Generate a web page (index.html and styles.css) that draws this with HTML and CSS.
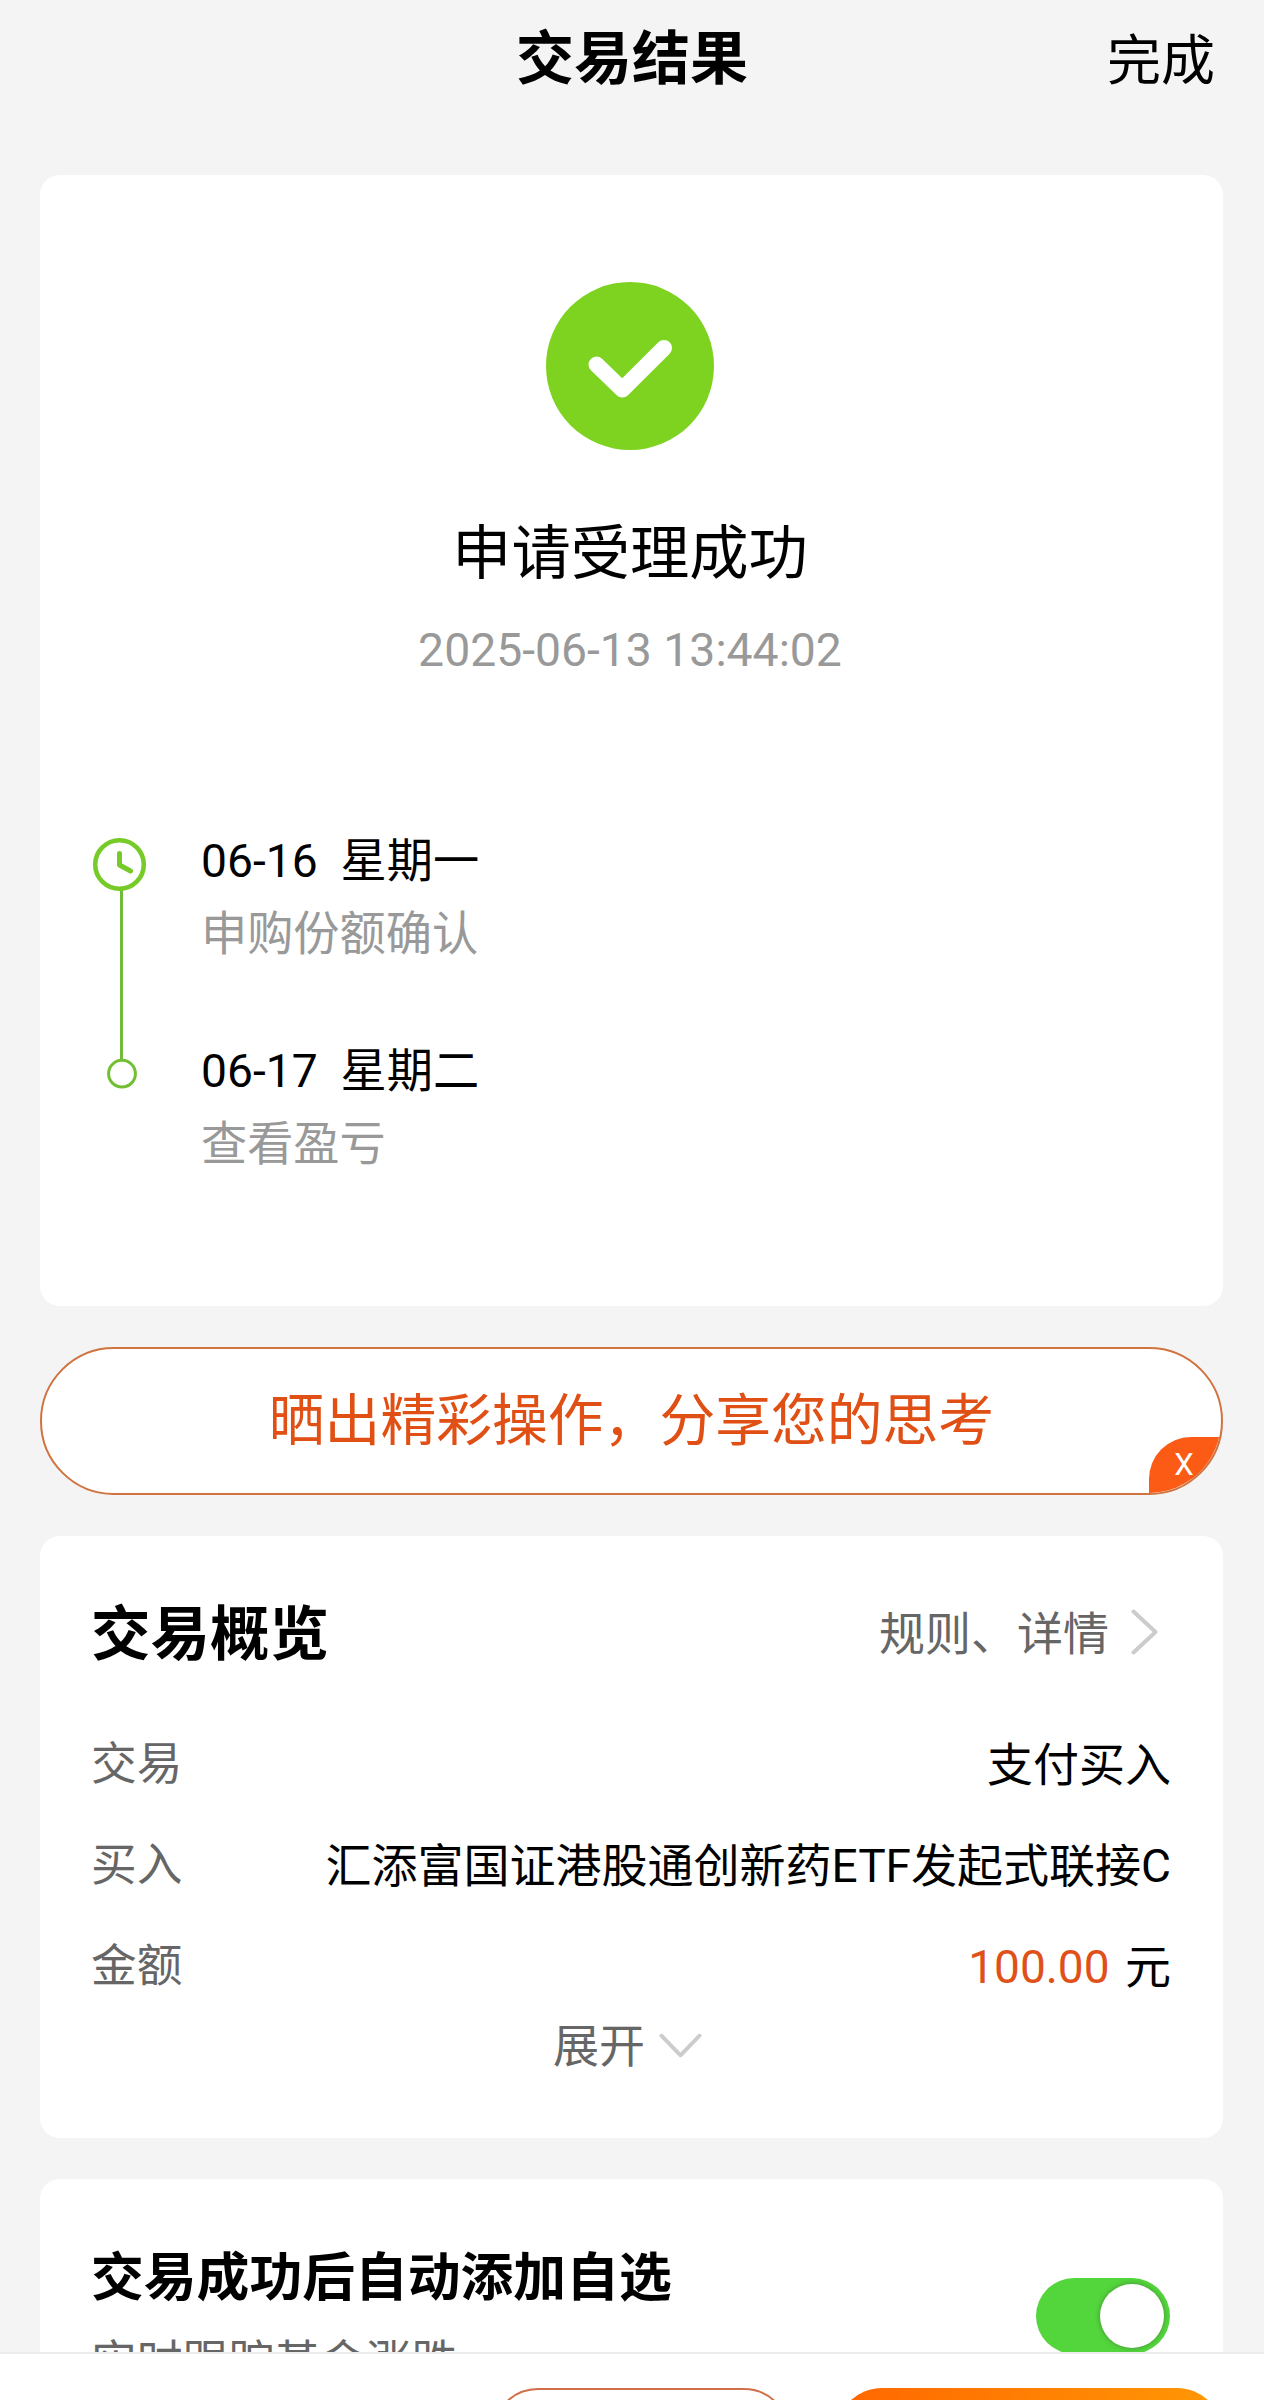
FILE: index.html
```html
<!DOCTYPE html>
<html lang="zh-CN">
<head>
<meta charset="utf-8">
<title>交易结果</title>
<link rel="stylesheet" href="styles.css">
</head>
<body>
<div class="screen">
  <header class="header">
    <h1 class="header-title">交易结果</h1>
    <a class="header-done">完成</a>
  </header>

  <main class="content">
    <section class="card result">
      <div class="status">
        <svg class="status-icon" viewBox="0 0 168 168">
          <circle cx="84" cy="84" r="84" fill="#7ed321"/>
          <path d="M50.5 82.5 L76.3 107.5 L118 66" fill="none" stroke="#fff" stroke-width="16" stroke-linecap="round" stroke-linejoin="round"/>
        </svg>
        <p class="status-text">申请受理成功</p>
        <p class="status-time">2025-06-13 13:44:02</p>
      </div>
      <div class="timeline">
        <svg class="timeline-rail" viewBox="0 0 60 260">
          <path d="M30.5 52 V222" stroke="#72bb3a" stroke-width="3"/>
          <circle cx="28.5" cy="27.5" r="24.3" fill="#fff" stroke="#76cb28" stroke-width="4.6"/>
          <path d="M28.5 16.5 V28 L39.5 34" fill="none" stroke="#76cb28" stroke-width="5" stroke-linecap="round" stroke-linejoin="round"/>
          <circle cx="31" cy="236.7" r="13.4" fill="#fff" stroke="#72bf33" stroke-width="3"/>
        </svg>
        <ol class="steps">
          <li class="step">
            <p class="step-date">06-16&nbsp; 星期一</p>
            <p class="step-note">申购份额确认</p>
          </li>
          <li class="step">
            <p class="step-date">06-17&nbsp; 星期二</p>
            <p class="step-note">查看盈亏</p>
          </li>
        </ol>
      </div>
    </section>

    <div class="share">
      <span class="share-text">晒出精彩操作，分享您的思考</span>
      <span class="share-close">X</span>
    </div>

    <section class="card overview">
      <div class="overview-head">
        <h2 class="overview-title">交易概览</h2>
        <a class="rules">
          <span>规则、详情</span>
          <svg class="chevron-right" viewBox="0 0 28 46"><path d="M2.5 2.5 L24.5 23 L2.5 43.5" fill="none" stroke="#ccc" stroke-width="4" stroke-linecap="round" stroke-linejoin="round"/></svg>
        </a>
      </div>
      <dl class="rows">
        <div class="row"><dt>交易</dt><dd>支付买入</dd></div>
        <div class="row"><dt>买入</dt><dd>汇添富国证港股通创新药ETF发起式联接C</dd></div>
        <div class="row"><dt>金额</dt><dd><span class="amount">100.00</span> 元</dd></div>
      </dl>
      <div class="expand">
        <span>展开</span>
        <svg class="chevron-down" viewBox="0 0 44 26"><path d="M2.5 2.5 L22 22.5 L41.5 2.5" fill="none" stroke="#ccc" stroke-width="4" stroke-linecap="round" stroke-linejoin="round"/></svg>
      </div>
    </section>

    <section class="card auto-add">
      <div>
        <h2 class="auto-title">交易成功后自动添加自选</h2>
        <p class="auto-note">实时跟踪基金涨跌</p>
      </div>
      <div class="toggle"><span class="toggle-knob"></span></div>
    </section>
  </main>

  <footer class="actions">
    <div class="button button-outline"></div>
    <div class="button button-primary"></div>
  </footer>
</div>
</body>
</html>
```
FILE: styles.css
```css
* { box-sizing: border-box; }

body {
  margin: 0;
  background: #f4f4f4;
  color: #000;
  font-family: Roboto, "Noto Sans CJK SC", sans-serif;
  font-size: 46px;
  line-height: 60px;
}

h1, h2, p, ol, dl, dd { margin: 0; padding: 0; }
svg { display: block; flex: none; }

.screen {
  display: flex;
  flex-direction: column;
  height: 2400px;
  overflow: hidden;
}

.header {
  flex: none;
  display: grid;
  grid-template-columns: 1fr auto 1fr;
  align-items: center;
  height: 118px;
  padding: 0 49px;
}
.header-title {
  grid-column: 2;
  font-size: 58px;
  font-weight: 700;
}
.header-done {
  justify-self: end;
  padding-top: 6px;
  font-size: 54px;
}

.content {
  flex: none;
  display: flex;
  flex-direction: column;
  gap: 41px;
  height: 2234px;
  padding: 57px 41px 0 40px;
  overflow: hidden;
}

.card {
  flex: none;
  background: #fff;
  border-radius: 20px;
}

.result {
  height: 1131px;
  padding: 107px 0 0 51px;
}
.status {
  display: flex;
  flex-direction: column;
  align-items: center;
  padding-right: 54px;
}
.status-icon { width: 168px; height: 168px; }
.status-text {
  margin-top: 69px;
  font-size: 59.3px;
  line-height: 70px;
}
.status-time {
  margin-top: 31px;
  font-size: 46.3px;
  color: #999;
}

.timeline {
  display: flex;
  margin-top: 150px;
}
.timeline-rail {
  width: 60px;
  height: 260px;
  margin: 7px 50px 0 0;
}
.steps {
  display: flex;
  flex-direction: column;
  gap: 77px;
  padding-top: 1px;
  font-size: 46.2px;
  list-style: none;
}
.step-note {
  margin-top: 13px;
  color: #999;
}

.share {
  flex: none;
  position: relative;
  display: flex;
  align-items: center;
  justify-content: center;
  height: 148px;
  border: 2px solid #d0733f;
  border-radius: 74px;
  background: #fff;
  overflow: hidden;
}
.share-text {
  font-size: 55.8px;
  color: #e04f14;
}
.share-close {
  position: absolute;
  right: 0;
  bottom: 0;
  width: 72px;
  height: 56px;
  padding-right: 2px;
  border-top-left-radius: 42px;
  background: #fb5b14;
  color: #fff;
  font-size: 31px;
  line-height: 55px;
  text-align: center;
}

.overview {
  height: 602px;
  padding: 69px 52px 0 51px;
}
.overview-head {
  display: flex;
  align-items: center;
  justify-content: space-between;
}
.overview-title {
  font-size: 59.5px;
  font-weight: 700;
}
.rules {
  display: flex;
  align-items: center;
  gap: 22px;
  margin-top: -3px;
  padding-right: 12px;
  color: #666;
}
.chevron-right { width: 28px; height: 46px; margin-top: -4px; }

.rows { margin-top: 70px; }
.row {
  display: flex;
  justify-content: space-between;
  height: 101px;
}
dt {
  font-size: 45.7px;
  color: #666;
}
.amount {
  margin-right: 4px;
  color: #e05118;
}

.expand {
  display: flex;
  align-items: center;
  justify-content: center;
  gap: 14px;
  margin-top: -22px;
  padding-right: 7px;
  color: #666;
}
.chevron-down { width: 43px; height: 26px; }

.auto-add {
  display: flex;
  justify-content: space-between;
  height: 260px;
  padding: 69px 53px 0 51px;
}
.auto-title {
  font-size: 52.8px;
  font-weight: 700;
}
.auto-note {
  margin-top: 25px;
  font-size: 45.8px;
  color: #666;
}
.toggle {
  display: flex;
  align-items: center;
  justify-content: flex-end;
  width: 134px;
  height: 76px;
  margin-top: 30px;
  padding-right: 6px;
  border-radius: 38px;
  background: #53d53c;
}
.toggle-knob {
  width: 64px;
  height: 64px;
  border-radius: 50%;
  background: #fff;
  box-shadow: 0 0 5px rgba(60, 90, 50, 0.6);
}

.actions {
  flex: none;
  display: flex;
  justify-content: flex-end;
  gap: 46px;
  height: 140px;
  padding: 34px 41px 0;
  border-top: 2px solid #ededed;
  background: #fff;
}
.button {
  height: 92px;
  border-radius: 46px;
}
.button-outline {
  width: 298px;
  border: 2px solid #cf7048;
}
.button-primary {
  width: 387px;
  background: linear-gradient(90deg, #ff6600, #ff9805);
}
```
